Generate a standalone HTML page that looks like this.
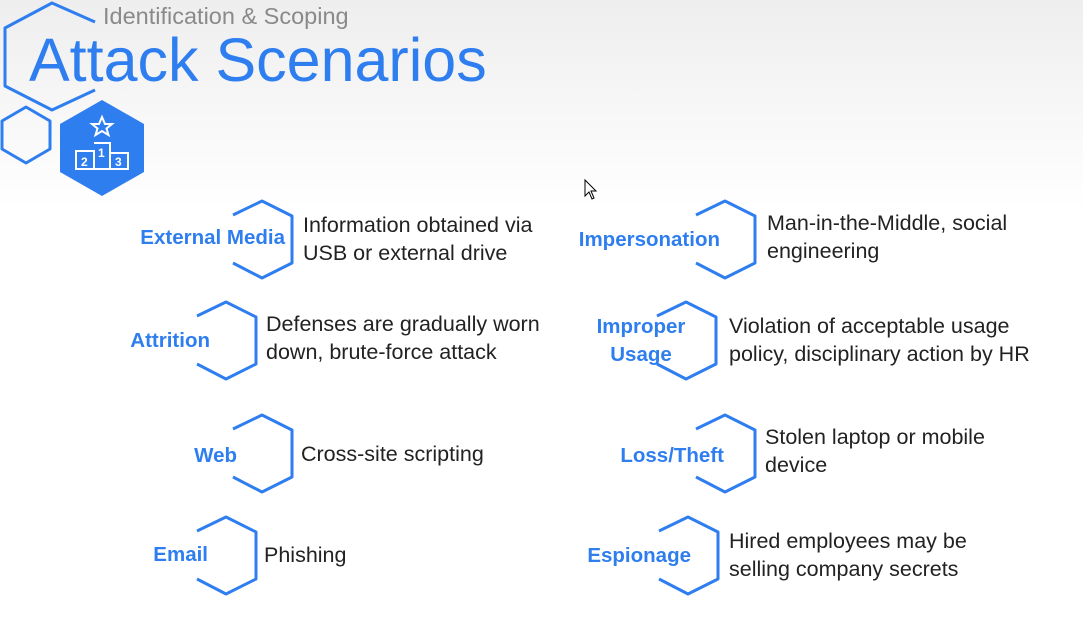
<!DOCTYPE html>
<html><head><meta charset="utf-8"><style>
html,body{margin:0;padding:0}
body{width:1083px;height:633px;position:relative;overflow:hidden;background:linear-gradient(#eeeeee 0px,#f7f7f7 110px,#ffffff 210px);font-family:"Liberation Sans",sans-serif}
.t{position:absolute;white-space:nowrap}
.l{color:#2f7ef0;font-weight:bold;font-size:20.5px;line-height:28px}
.d{color:#222;font-size:21.5px;line-height:28px}
svg{position:absolute;left:0;top:0}
</style></head><body>
<svg width="1083" height="633">
<g fill="none" stroke="#2f7ef0" stroke-width="3" stroke-linejoin="round">
<path d="M95,22 L52,3 L5,28 L5,86 L52,110 L95,90"/>
<path d="M26,107 L50,121 L50,149 L26,163 L2,149 L2,121 Z"/>
<g transform="translate(233,201)"><path d="M0,14 L29,0 L59,15 L59,62 L29,77 L0,62"/></g>
<g transform="translate(197,302)"><path d="M0,14 L29,0 L59,15 L59,62 L29,77 L0,62"/></g>
<g transform="translate(233,415)"><path d="M0,14 L29,0 L59,15 L59,62 L29,77 L0,62"/></g>
<g transform="translate(197,517)"><path d="M0,14 L29,0 L59,15 L59,62 L29,77 L0,62"/></g>
<g transform="translate(696,201)"><path d="M0,14 L29,0 L59,15 L59,62 L29,77 L0,62"/></g>
<g transform="translate(657,302)"><path d="M0,14 L29,0 L59,15 L59,62 L29,77 L0,62"/></g>
<g transform="translate(696,415)"><path d="M0,14 L29,0 L59,15 L59,62 L29,77 L0,62"/></g>
<g transform="translate(659,517)"><path d="M0,14 L29,0 L59,15 L59,62 L29,77 L0,62"/></g>
</g>
<path d="M102,100 L144,124 L144,172 L102,196 L60,172 L60,124 Z" fill="#2f7ef0"/>
<g fill="none" stroke="#fff" stroke-width="2">
<path d="M102,117 L105,124 L112,124 L106.5,128.5 L108.5,135 L102,131 L95.5,135 L97.5,128.5 L92,124 L99,124 Z"/>
<path d="M76,151 H94 V169 H76 Z M94,143 H110 V169 H94 M110,153 H128 V169 H110"/>
</g>
<g fill="#fff" font-family="Liberation Sans" font-size="12" font-weight="bold">
<text x="81" y="166">2</text><text x="98" y="157">1</text><text x="115" y="166">3</text>
</g>
<path d="M585,180 L585,196 L589,192 L592,199 L594,198 L591,191 L596,191 Z" fill="#fff" stroke="#000" stroke-width="1"/>
</svg>
<div class="t" style="left:103px;top:3px;font-size:23.5px;color:#8a8a8a">Identification &amp; Scoping</div>
<div class="t" style="left:29px;top:25px;font-size:61px;color:#2f7ef0">Attack Scenarios</div>

<div class="t l" style="right:798px;top:224px">External Media</div>
<div class="t d" style="left:303px;top:211px">Information obtained via<br>USB or external drive</div>
<div class="t l" style="right:873px;top:327px">Attrition</div>
<div class="t d" style="left:266px;top:310px">Defenses are gradually worn<br>down, brute-force attack</div>
<div class="t l" style="right:846px;top:442px">Web</div>
<div class="t d" style="left:301px;top:440px">Cross-site scripting</div>
<div class="t l" style="right:875px;top:541px">Email</div>
<div class="t d" style="left:264px;top:541px">Phishing</div>

<div class="t l" style="right:363px;top:226px">Impersonation</div>
<div class="t d" style="left:767px;top:209px">Man-in-the-Middle, social<br>engineering</div>
<div class="t l" style="left:581px;width:120px;text-align:center;top:313px">Improper<br>Usage</div>
<div class="t d" style="left:729px;top:312px">Violation of acceptable usage<br>policy, disciplinary action by HR</div>
<div class="t l" style="right:359px;top:442px">Loss/Theft</div>
<div class="t d" style="left:765px;top:423px">Stolen laptop or mobile<br>device</div>
<div class="t l" style="right:392px;top:542px">Espionage</div>
<div class="t d" style="left:729px;top:527px">Hired employees may be<br>selling company secrets</div>
</body></html>
